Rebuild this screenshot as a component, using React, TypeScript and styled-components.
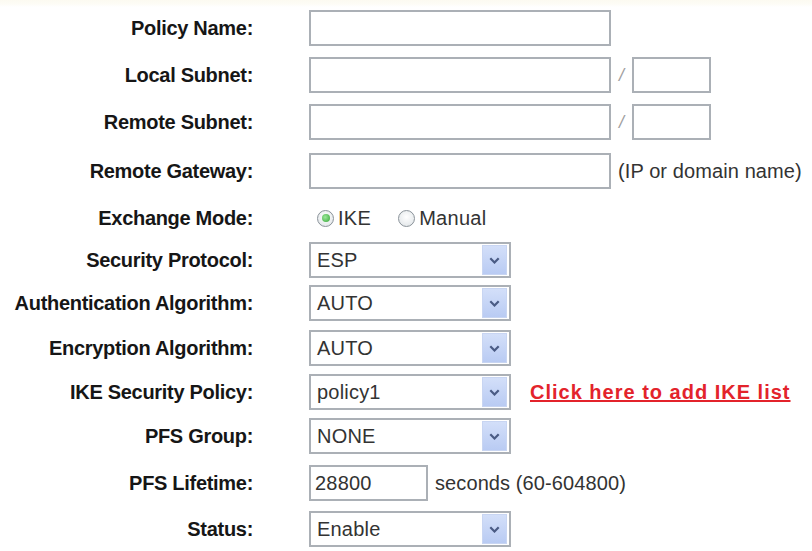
import styled, { createGlobalStyle } from "styled-components";

const GlobalStyle = createGlobalStyle`
  html, body {
    margin: 0;
    background: #fff;
  }
  body {
    font-family: "Liberation Sans", Arial, sans-serif;
  }
`;

const Page = styled.div`
  width: 812px;
  height: 551px;
  overflow: hidden;
  box-sizing: border-box;
  padding-top: 10px;
  background: linear-gradient(to bottom, #fcfaf1 0, #fdfcf6 4px, #fff 7px);
`;

const Row = styled.div<{ $gap?: number }>`
  display: grid;
  grid-template-columns: 253px 1fr;
  column-gap: 56px;
  align-items: center;
  height: 36px;
  margin-top: ${(p) => p.$gap ?? 0}px;
`;

const Label = styled.div`
  text-align: right;
  font-weight: bold;
  font-size: 20px;
  letter-spacing: -0.3px;
  color: #161616;
  white-space: nowrap;
`;

const Field = styled.div`
  display: flex;
  align-items: center;
  height: 36px;
`;

const TextBox = styled.input<{ $w: number }>`
  width: ${(p) => p.$w}px;
  height: 36px;
  box-sizing: border-box;
  border: 2px solid #abb0b6;
  background: #fff;
  padding: 0 4px;
  margin: 0;
  font-family: "Liberation Sans", Arial, sans-serif;
  font-size: 20px;
  letter-spacing: 0.2px;
  color: #333;
  outline: none;
`;

const Slash = styled.span`
  width: 21px;
  text-align: center;
  color: #a0a0a0;
  font-size: 18px;
  font-style: italic;
`;

const Hint = styled.span`
  margin-left: 7px;
  font-size: 20px;
  letter-spacing: 0.1px;
  color: #333;
  white-space: nowrap;
`;

const SelectBox = styled.div`
  width: 202px;
  height: 36px;
  box-sizing: border-box;
  border: 2px solid #abb0b6;
  background: #fff;
  display: flex;
  align-items: center;
  justify-content: space-between;
  padding: 0 2px 0 6px;
`;

const SelectText = styled.span`
  font-size: 20px;
  letter-spacing: 0.2px;
  color: #333;
`;

const ArrowButton = styled.span`
  width: 25px;
  height: 30px;
  display: flex;
  align-items: center;
  justify-content: center;
  background: linear-gradient(to bottom, #d3dff9, #b9cbf3);
  border: 1px solid #c8d5f2;
  box-sizing: border-box;
`;

const RadioGroup = styled.div`
  display: flex;
  align-items: center;
  gap: 27px;
  padding-left: 8px;
`;

const RadioOption = styled.label`
  display: flex;
  align-items: center;
  gap: 4px;
  font-size: 20px;
  letter-spacing: 0.3px;
  color: #333;
`;

const RadioCircle = styled.span<{ $checked?: boolean }>`
  width: 17px;
  height: 17px;
  box-sizing: border-box;
  border-radius: 50%;
  border: 1.5px solid #8a9299;
  background: radial-gradient(circle at 50% 40%, #fff, #dde2e5);
  display: flex;
  align-items: center;
  justify-content: center;

  &::after {
    content: "";
    display: ${(p) => (p.$checked ? "block" : "none")};
    width: 8px;
    height: 8px;
    border-radius: 50%;
    background: radial-gradient(circle at 40% 40%, #9be89b, #35a535);
  }
`;

const Link = styled.a`
  margin-left: 19px;
  font-weight: bold;
  font-size: 20px;
  letter-spacing: 1px;
  color: #e3232b;
  text-decoration: underline;
  white-space: nowrap;
  cursor: pointer;
`;

const Select = ({ value }: { value: string }) => (
  <SelectBox>
    <SelectText>{value}</SelectText>
    <ArrowButton>
      <svg width="11" height="7" viewBox="0 0 11 7">
        <path d="M1.3 1.3 L5.5 5.5 L9.7 1.3" fill="none" stroke="#4a5b84" strokeWidth="2.2" />
      </svg>
    </ArrowButton>
  </SelectBox>
);

export default function App() {
  return (
    <>
      <GlobalStyle />
      <Page>
        <Row>
          <Label>Policy Name:</Label>
          <Field>
            <TextBox $w={302} readOnly />
          </Field>
        </Row>
        <Row $gap={11}>
          <Label>Local Subnet:</Label>
          <Field>
            <TextBox $w={302} readOnly />
            <Slash>/</Slash>
            <TextBox $w={79} readOnly />
          </Field>
        </Row>
        <Row $gap={11}>
          <Label>Remote Subnet:</Label>
          <Field>
            <TextBox $w={302} readOnly />
            <Slash>/</Slash>
            <TextBox $w={79} readOnly />
          </Field>
        </Row>
        <Row $gap={13}>
          <Label>Remote Gateway:</Label>
          <Field>
            <TextBox $w={302} readOnly />
            <Hint>(IP or domain name)</Hint>
          </Field>
        </Row>
        <Row $gap={11}>
          <Label>Exchange Mode:</Label>
          <RadioGroup>
            <RadioOption>
              <RadioCircle $checked />
              IKE
            </RadioOption>
            <RadioOption>
              <RadioCircle />
              Manual
            </RadioOption>
          </RadioGroup>
        </Row>
        <Row $gap={6}>
          <Label>Security Protocol:</Label>
          <Field>
            <Select value="ESP" />
          </Field>
        </Row>
        <Row $gap={7}>
          <Label>Authentication Algorithm:</Label>
          <Field>
            <Select value="AUTO" />
          </Field>
        </Row>
        <Row $gap={9}>
          <Label>Encryption Algorithm:</Label>
          <Field>
            <Select value="AUTO" />
          </Field>
        </Row>
        <Row $gap={8}>
          <Label>IKE Security Policy:</Label>
          <Field>
            <Select value="policy1" />
            <Link>Click here to add IKE list</Link>
          </Field>
        </Row>
        <Row $gap={8}>
          <Label>PFS Group:</Label>
          <Field>
            <Select value="NONE" />
          </Field>
        </Row>
        <Row $gap={11}>
          <Label>PFS Lifetime:</Label>
          <Field>
            <TextBox $w={119} defaultValue="28800" readOnly />
            <Hint>seconds (60-604800)</Hint>
          </Field>
        </Row>
        <Row $gap={10}>
          <Label>Status:</Label>
          <Field>
            <Select value="Enable" />
          </Field>
        </Row>
      </Page>
    </>
  );
}
